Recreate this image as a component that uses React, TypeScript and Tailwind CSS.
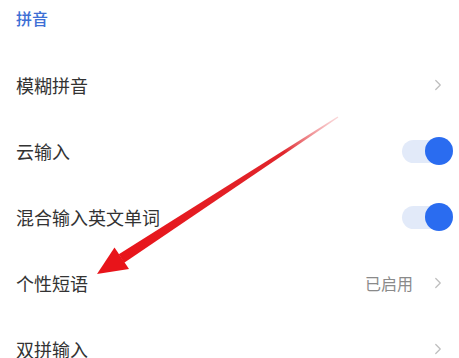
import { ChevronRight } from 'lucide-react'

type Row = {
  label: string
  kind: 'link' | 'toggle'
  value?: string
}

const rows: Row[] = [
  { label: '模糊拼音', kind: 'link' },
  { label: '云输入', kind: 'toggle' },
  { label: '混合输入英文单词', kind: 'toggle' },
  { label: '个性短语', kind: 'link', value: '已启用' },
  { label: '双拼输入', kind: 'link' },
]

function Toggle() {
  return (
    <div className="relative w-[51px] h-[28px] flex items-center">
      <div className="w-[50px] h-[23px] rounded-full bg-[#e2eaf9]" />
      <div className="absolute right-0 top-0 w-[28px] h-[28px] rounded-full bg-[#2a6cf0]" />
    </div>
  )
}

function Arrow() {
  // red annotation arrow drawn over the list
  return (
    <svg className="absolute inset-0 pointer-events-none" width="459" height="358" viewBox="0 0 459 358">
      <defs>
        <linearGradient id="shaft" x1="338" y1="117" x2="121" y2="258" gradientUnits="userSpaceOnUse">
          <stop offset="0" stopColor="#f3a0a4" stopOpacity="0.4" />
          <stop offset="0.25" stopColor="#e0262c" />
          <stop offset="1" stopColor="#e8141a" />
        </linearGradient>
      </defs>
      <polygon points="338.4,117.6 337.6,116.4 118.8,254.3 124.2,262.7" fill="url(#shaft)" />
      <polygon points="97,274 114.5,247.5 129,269" fill="#e8141a" />
    </svg>
  )
}

export default function App() {
  return (
    <div
      className="relative w-[459px] h-[358px] overflow-hidden bg-white"
      style={{ fontFamily: '"Noto Sans CJK SC", "Noto Sans", sans-serif' }}
    >
      <div className="h-[52px] pt-[6px] pl-[16px]">
        <p className="text-[16px] leading-[24px] font-medium text-[#3d6fd5]">拼音</p>
      </div>
      {rows.map(row => (
        <div key={row.label} className="h-[66px] flex items-center pl-[16px] pr-[6px]">
          <span className="flex-1 text-[18px] text-[#333333]">{row.label}</span>
          {row.kind === 'toggle' ? (
            <Toggle />
          ) : (
            <div className="flex items-center">
              {row.value && (
                <span className="text-[16px] text-[#8a8a8a] mr-[16px]">{row.value}</span>
              )}
              <ChevronRight className="w-[18px] h-[18px] text-[#bdbdbd] mr-[6px]" strokeWidth={1.6} />
            </div>
          )}
        </div>
      ))}
      <Arrow />
    </div>
  )
}
